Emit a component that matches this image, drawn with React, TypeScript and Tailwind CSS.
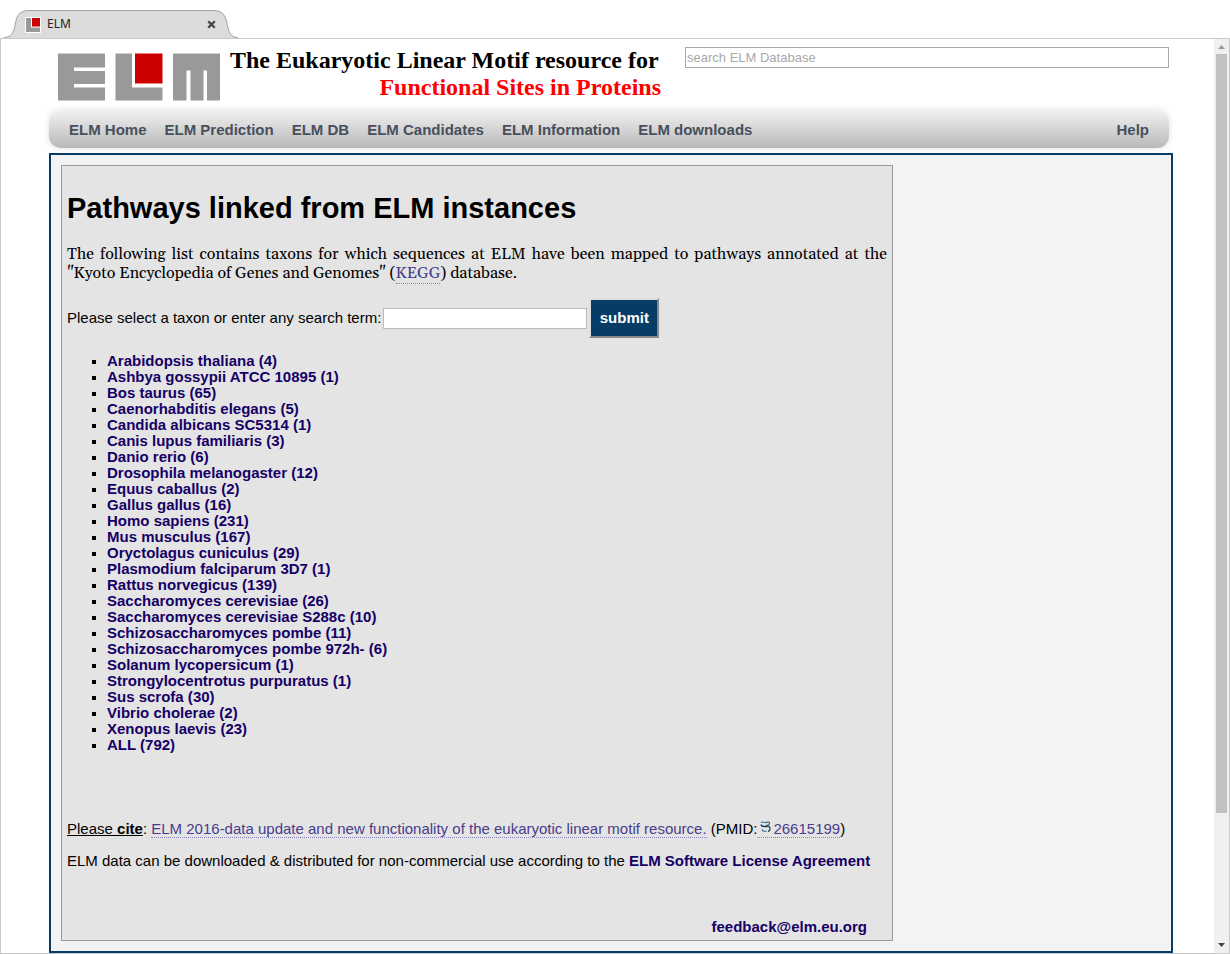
const navItems = ["ELM Home", "ELM Prediction", "ELM DB", "ELM Candidates", "ELM Information", "ELM downloads"];

const taxons: [string, number][] = [
  ["Arabidopsis thaliana", 4],
  ["Ashbya gossypii ATCC 10895", 1],
  ["Bos taurus", 65],
  ["Caenorhabditis elegans", 5],
  ["Candida albicans SC5314", 1],
  ["Canis lupus familiaris", 3],
  ["Danio rerio", 6],
  ["Drosophila melanogaster", 12],
  ["Equus caballus", 2],
  ["Gallus gallus", 16],
  ["Homo sapiens", 231],
  ["Mus musculus", 167],
  ["Oryctolagus cuniculus", 29],
  ["Plasmodium falciparum 3D7", 1],
  ["Rattus norvegicus", 139],
  ["Saccharomyces cerevisiae", 26],
  ["Saccharomyces cerevisiae S288c", 10],
  ["Schizosaccharomyces pombe", 11],
  ["Schizosaccharomyces pombe 972h-", 6],
  ["Solanum lycopersicum", 1],
  ["Strongylocentrotus purpuratus", 1],
  ["Sus scrofa", 30],
  ["Vibrio cholerae", 2],
  ["Xenopus laevis", 23],
  ["ALL", 792],
];

function TabStrip() {
  return (
    <div className="flex h-[38px] items-end pl-1">
      <div className="relative flex h-7 w-[234px] items-center pl-[21px] pr-[22px]">
        <svg className="absolute inset-0 h-full w-full" viewBox="0 0 234 28" aria-hidden="true">
          <path
            d="M0 27.5C6 27.5 9 24 10.500 18C12.500 8 13 .5 25 .5H209C221 .5 222 8 224 18C225.500 24 228 27.500 234 27.500V28H0Z"
            fill="#dcdcdc"
          />
          <path
            d="M0 27.500C6 27.500 9 24 10.500 18C12.500 8 13 .5 25 .5H209C221 .5 222 8 224 18C225.500 24 228 27.500 234 27.500"
            fill="none"
            stroke="#a0a3a8"
          />
        </svg>
        <svg className="relative top-px h-4 w-4" viewBox="0 0 16 16" aria-hidden="true">
          <path d="M0 0H16V16H0Z" fill="#fff" />
          <path d="M1 1H6V10.500H15V15H1Z" fill="#999" />
          <path d="M7 1H15V9.500H7Z" fill="#c00" />
        </svg>
        <span className="relative ml-1.5 font-['Noto_Sans',sans-serif] text-xs text-[#222]">ELM</span>
        <button type="button" aria-label="Close tab" className="relative ml-auto">
          <svg className="h-[9px] w-[9px]" viewBox="0 0 9 9" aria-hidden="true">
            <path d="M1.200 1.200L7.800 7.800M7.800 1.200L1.200 7.800" stroke="#444" strokeWidth="2.300" />
          </svg>
        </button>
      </div>
    </div>
  );
}

function Logo() {
  return (
    <svg className="h-12 w-[163px] shrink-0" viewBox="0 0 163 48" role="img" aria-label="ELM">
      <g fill="#999">
        <path d="M0 .5H47V14.500H16V18H47V31H16V34.500H47V47.500H0Z" />
        <path d="M57.500 .5H74V34.500H104.500V47.500H57.500Z" />
        <path d="M115 .5H162V47.500H149V17.500H145.500V47.500H132.500V17.500H128.500V47.500H115Z" />
      </g>
      <path d="M77 .5H104.500V30.500H77Z" fill="#c00" />
    </svg>
  );
}

function Scrollbar() {
  return (
    <div className="flex w-[15px] shrink-0 flex-col items-center bg-[#f0f0f0]" aria-hidden="true">
      <svg className="h-[15px] w-[15px] shrink-0" viewBox="0 0 15 15">
        <path d="M4 10L7.500 6L11 10Z" fill="#999" />
      </svg>
      <div className="w-[11px] grow-[759] bg-[#c1c1c1]" />
      <div className="grow-[125]" />
      <svg className="h-[15px] w-[15px] shrink-0" viewBox="0 0 15 15">
        <path d="M4 5L7.500 9L11 5Z" fill="#444" />
      </svg>
    </div>
  );
}

export default function App() {
  return (
    <div className="flex min-h-screen flex-col bg-white font-['Liberation_Sans',Arial,sans-serif] text-[15px] text-black">
      <TabStrip />
      <div className="flex grow border border-[#c8c8c8]">
        <div className="flex grow flex-col pl-12 pr-[41px]">
          <header className="mr-1 flex h-[71px] items-start pt-2">
            <div className="pl-[9px] pt-1.5">
              <Logo />
            </div>
            <p className="ml-[9px] w-[431px] shrink-0 text-right font-['Liberation_Serif',serif] text-2xl leading-[27px] font-bold">
              <span className="block text-left">The Eukaryotic Linear Motif resource for</span>
              <span className="block text-[#f00]">Functional Sites in Proteins</span>
            </p>
            <input
              type="search"
              aria-label="search ELM Database"
              placeholder="search ELM Database"
              className="ml-6 h-[21px] min-w-0 flex-1 border border-[#a9a9a9] bg-white px-px text-[13px] placeholder:text-[#a9a9a9]"
            />
          </header>
          <nav className="mr-1 flex h-[38px] items-center gap-[18px] rounded-xl bg-linear-to-b from-[#f2f2f2] to-[#b9b9b9] px-5 pt-0.5 font-bold text-[#47505c] shadow-[0_0_6px_#ddd]">
            {navItems.map((item) => (
              <a key={item} href="#" className="whitespace-nowrap">
                {item}
              </a>
            ))}
            <a href="#" className="ml-auto">
              Help
            </a>
          </nav>
          <div className="mt-[5px] flex grow border-2 border-[#073c66] bg-[#f3f3f3] py-2.5 pl-2.5">
            <main className="flex min-w-0 flex-1 flex-col border border-[#999] bg-[#e4e4e4] px-[5px]">
              <h1 className="mt-6 text-[29px] leading-9 font-bold">Pathways linked from ELM instances</h1>
              <p className="mt-[19px] text-justify font-[Georgia,Gelasio,'Liberation_Serif',serif] text-base leading-[19px]">
                The following list contains taxons for which sequences at ELM have been mapped to pathways annotated at
                the "Kyoto Encyclopedia of Genes and Genomes" (
                <a href="#" className="border-b border-dotted border-[#8a82c4] text-[#483d8b]">
                  KEGG
                </a>
                ) database.
              </p>
              <form className="mt-[15px] flex items-center" onSubmit={(event) => event.preventDefault()}>
                <label htmlFor="taxon">Please select a taxon or enter any search term:</label>
                <input
                  id="taxon"
                  type="text"
                  className="ml-0.5 h-[21px] w-[204px] border border-[#bbb] bg-white px-1 text-[13px]"
                />
                <button
                  type="submit"
                  className="ml-0.5 h-10 w-[70px] border-2 border-t-[#dcdfe1] border-r-[#888] border-b-[#888] border-l-[#dcdfe1] bg-[#073c66] font-bold text-white"
                >
                  submit
                </button>
              </form>
              <ul className="mt-[15px] list-[square] pl-10 leading-4 font-bold marker:text-[13px] marker:text-black">
                {taxons.map(([name, count]) => (
                  <li key={name}>
                    <a href="#" className="text-[#160066]">
                      {name} ({count})
                    </a>
                  </li>
                ))}
              </ul>
              <p className="mt-[67px] leading-4">
                <span className="underline">
                  Please <b>cite</b>
                </span>
                :{" "}
                <a href="#" className="border-b border-dotted border-[#8a82c4] text-[#483d8b]">
                  ELM 2016-data update and new functionality of the eukaryotic linear motif resource.
                </a>{" "}
                (PMID:
                <a href="#" className="border-b border-dotted border-[#8a82c4] text-[#483d8b]">
                  <svg className="ml-[3px] mr-0.5 inline h-3.5 w-[11px] align-baseline" viewBox="0 0 11 14" fill="none" aria-hidden="true">
                    <path d="M1 2.500C2.500 1 4 3 6 2.500S9.500 1.500 9.500 3.500S7.500 5.500 5.500 5.500" stroke="#3f6f86" strokeWidth="1.200" />
                    <path d="M1 4.500C1.500 7 4 6.500 6 6.500S10 6 10 8.500S9.500 11 8 11.500" stroke="#1d4058" strokeWidth="1.300" />
                    <path d="M2 9.500C2.500 11.500 5 11.500 6.500 11.500" stroke="#3f6f86" strokeWidth="1.200" />
                  </svg>
                  26615199
                </a>
                )
              </p>
              <p className="mt-4 leading-4">
                ELM data can be downloaded &amp; distributed for non-commercial use according to the{" "}
                <a href="#" className="font-bold text-[#160066]">
                  ELM Software License Agreement
                </a>
              </p>
              <a href="#" className="mt-auto mr-5 mb-[5px] self-end leading-4 font-bold text-[#160066]">
                feedback@elm.eu.org
              </a>
            </main>
            <aside className="w-[278px] shrink-0" />
          </div>
        </div>
        <Scrollbar />
      </div>
    </div>
  );
}
